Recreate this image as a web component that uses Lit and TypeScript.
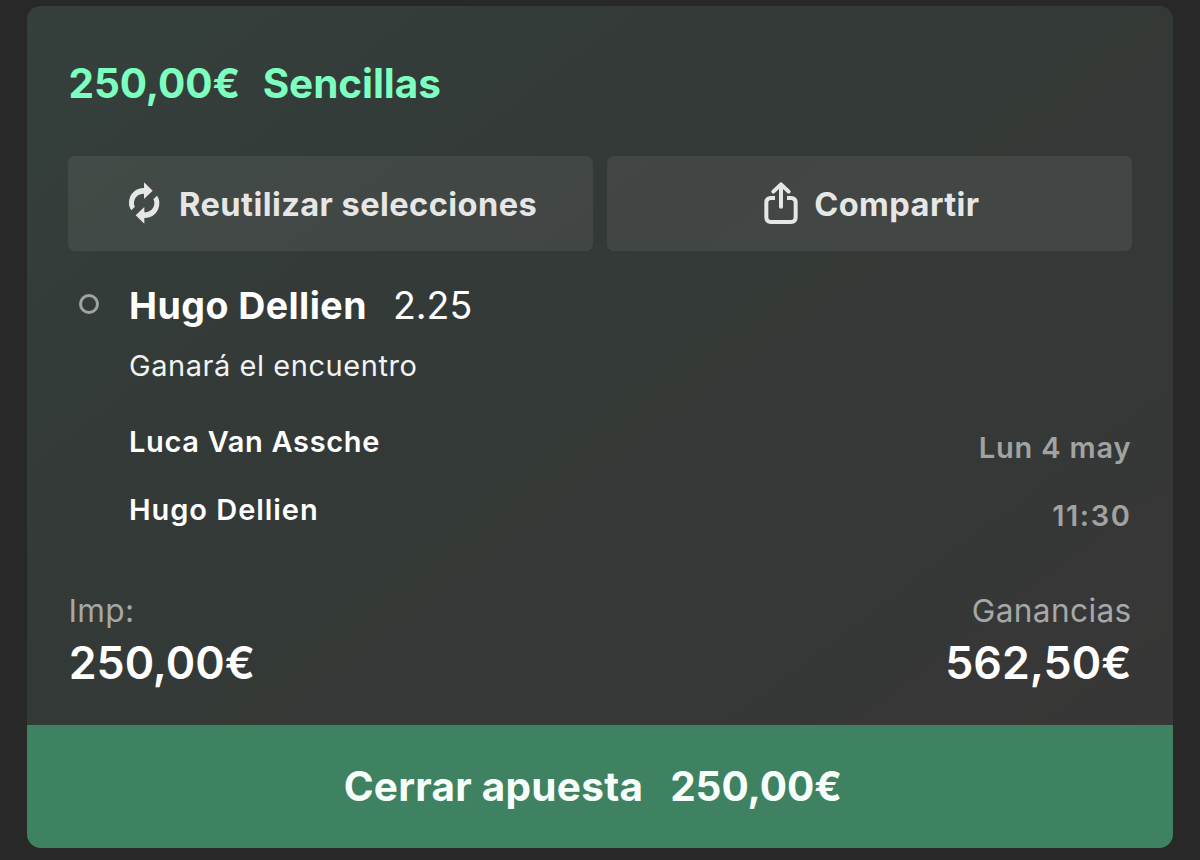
import { LitElement, html, css } from 'lit';
import { customElement, property } from 'lit/decorators.js';

/**
 * Secondary action in a bet card: an icon followed by a label
 */
@customElement('bet-action')
export class BetAction extends LitElement {

  @property({ type: String }) label = '';

  static styles = css`
    :host {
      display: block;
      flex: 1;
    }

    button {
      display: flex;
      justify-content: center;
      align-items: center;
      gap: 11.5px;
      width: 100%;
      height: 95.5px;
      padding: 2px 0 0;
      border: none;
      border-radius: 7px;
      background: rgba(255, 255, 255, 0.07);
      color: #e6e6e6;
      font: 700 32.6px/40px Inter, sans-serif;
      letter-spacing: 0.43px;
      white-space: nowrap;
      cursor: pointer;
    }
  `;

  render () {

    return html`
      <button>
        <slot></slot>
        <span>${this.label}</span>
      </button>
    `;

  }

}

/**
 * Open bet with its selection, stake, winnings and the cash out button
 */
@customElement('app-root')
export default class App extends LitElement {

  @property({ type: String }) stake = '250,00€';

  @property({ type: String }) winnings = '562,50€';

  static styles = css`
    :host {
      display: block;
      box-sizing: border-box;
      height: 860px;
      padding: 5.5px 27.5px 12px 27px;
      background: #282828;
      color: #fff;
      font-family: Inter, sans-serif;
      white-space: nowrap;
    }

    .card {
      display: flex;
      flex-direction: column;
      height: 842.5px;
      border-radius: 14px;
      overflow: hidden;
      background: linear-gradient(143deg, #35403c 0%, #333a37 30%, #353836 72%, #393636 100%);
    }

    .body {
      flex: 1;
      padding: 48.5px 41px 0;
    }

    .title {
      display: flex;
      gap: 22.5px;
      height: 60px;
      margin-bottom: 41.5px;
      padding-left: 0.5px;
      color: #7dffc0;
      font-size: 40.5px;
      font-weight: 700;
      line-height: 60px;
      letter-spacing: -0.08px;
    }

    .actions {
      display: flex;
      gap: 14px;
      margin-bottom: 29px;
    }
    .reuse-icon {
      width: 42px;
      height: 50px;
      margin: -2px 3px 0 -1px;
      fill: #e6e6e6;
    }
    .share-icon {
      width: 44px;
      height: 52px;
      fill: none;
      stroke: #e6e6e6;
      stroke-width: 12;
      stroke-linecap: round;
      stroke-linejoin: round;
    }

    .selection {
      display: grid;
      grid-template-columns: 61px 1fr;
    }
    .marker {
      box-sizing: border-box;
      width: 20px;
      height: 20px;
      margin: 14px 0 0 11px;
      border: solid 3px #a0a3a1;
      border-radius: 50%;
    }
    .pick {
      display: flex;
      gap: 26px;
      font-size: 37.5px;
      line-height: 51px;
    }
    .name {
      font-weight: 700;
      letter-spacing: 0.45px;
    }
    .market {
      margin: 17px 0 23.5px;
      color: #f2f3f3;
      font-size: 29px;
      line-height: 36px;
      letter-spacing: 0.55px;
    }

    .fixture {
      display: flex;
      justify-content: space-between;
      font-size: 29px;
      line-height: 68px;
    }
    .teams {
      font-weight: 600;
      letter-spacing: 0.67px;
    }
    .teams .away {
      letter-spacing: 0.95px;
    }
    .schedule {
      padding-top: 6px;
      color: #a1a3a2;
      font-size: 29px;
      font-weight: 600;
      letter-spacing: 0.85px;
      text-align: right;
    }
    .schedule .time {
      letter-spacing: 1.6px;
    }

    .totals {
      display: flex;
      justify-content: space-between;
      margin-top: 41px;
    }
    .totals .right {
      text-align: right;
    }
    .caption {
      padding-left: 0.5px;
      color: #a6a8a7;
      font-size: 31.6px;
      line-height: 40px;
      letter-spacing: 0.35px;
    }
    .amount {
      margin-top: 4px;
      padding-left: 0.7px;
      font-size: 44.7px;
      font-weight: 600;
      line-height: 56px;
    }

    .cash-out {
      display: flex;
      justify-content: center;
      align-items: center;
      gap: 27px;
      height: 123px;
      padding: 0 14px 0 0;
      border: none;
      background: #3f8262;
      color: #f7fffb;
      font: 700 40.5px/50px Inter, sans-serif;
      letter-spacing: 0.25px;
      cursor: pointer;
    }
    .cash-out .value {
      letter-spacing: -0.08px;
    }
  `;

  render () {

    return html`
      <div class="card">
        <div class="body">
          <div class="title"><span>${this.stake}</span><span>Sencillas</span></div>

          <div class="actions">
            <bet-action label="Reutilizar selecciones">
              <svg class="reuse-icon" viewBox="0 0 126 150">
                <path d="M63 13 89 38 63 63V47C45 47 33 59 33 75C33 80 34 83 36 86L25 97C20 90 18 83 18 75C18 48 38 30 63 30Z" />
                <path transform="rotate(180 63.5 75)" d="M63 13 89 38 63 63V47C45 47 33 59 33 75C33 80 34 83 36 86L25 97C20 90 18 83 18 75C18 48 38 30 63 30Z" />
              </svg>
            </bet-action>
            <bet-action label="Compartir">
              <svg class="share-icon" viewBox="0 0 132 156">
                <path d="M66 86V20M43 41 66 19 89 41" />
                <path stroke-linecap="butt" d="M48 60H36Q22 60 22 74V118Q22 132 36 132H96Q110 132 110 118V74Q110 60 96 60H84" />
              </svg>
            </bet-action>
          </div>

          <div class="selection">
            <div class="marker"></div>
            <div>
              <div class="pick"><span class="name">Hugo Dellien</span><span>2.25</span></div>
              <div class="market">Ganará el encuentro</div>
              <div class="fixture">
                <div class="teams">
                  <div>Luca Van Assche</div>
                  <div class="away">Hugo Dellien</div>
                </div>
                <div class="schedule">
                  <div>Lun 4 may</div>
                  <div class="time">11:30</div>
                </div>
              </div>
            </div>
          </div>

          <div class="totals">
            <div>
              <div class="caption">Imp:</div>
              <div class="amount">${this.stake}</div>
            </div>
            <div class="right">
              <div class="caption">Ganancias</div>
              <div class="amount">${this.winnings}</div>
            </div>
          </div>
        </div>

        <button class="cash-out">
          <span>Cerrar apuesta</span>
          <span class="value">${this.stake}</span>
        </button>
      </div>
    `;

  }

}
